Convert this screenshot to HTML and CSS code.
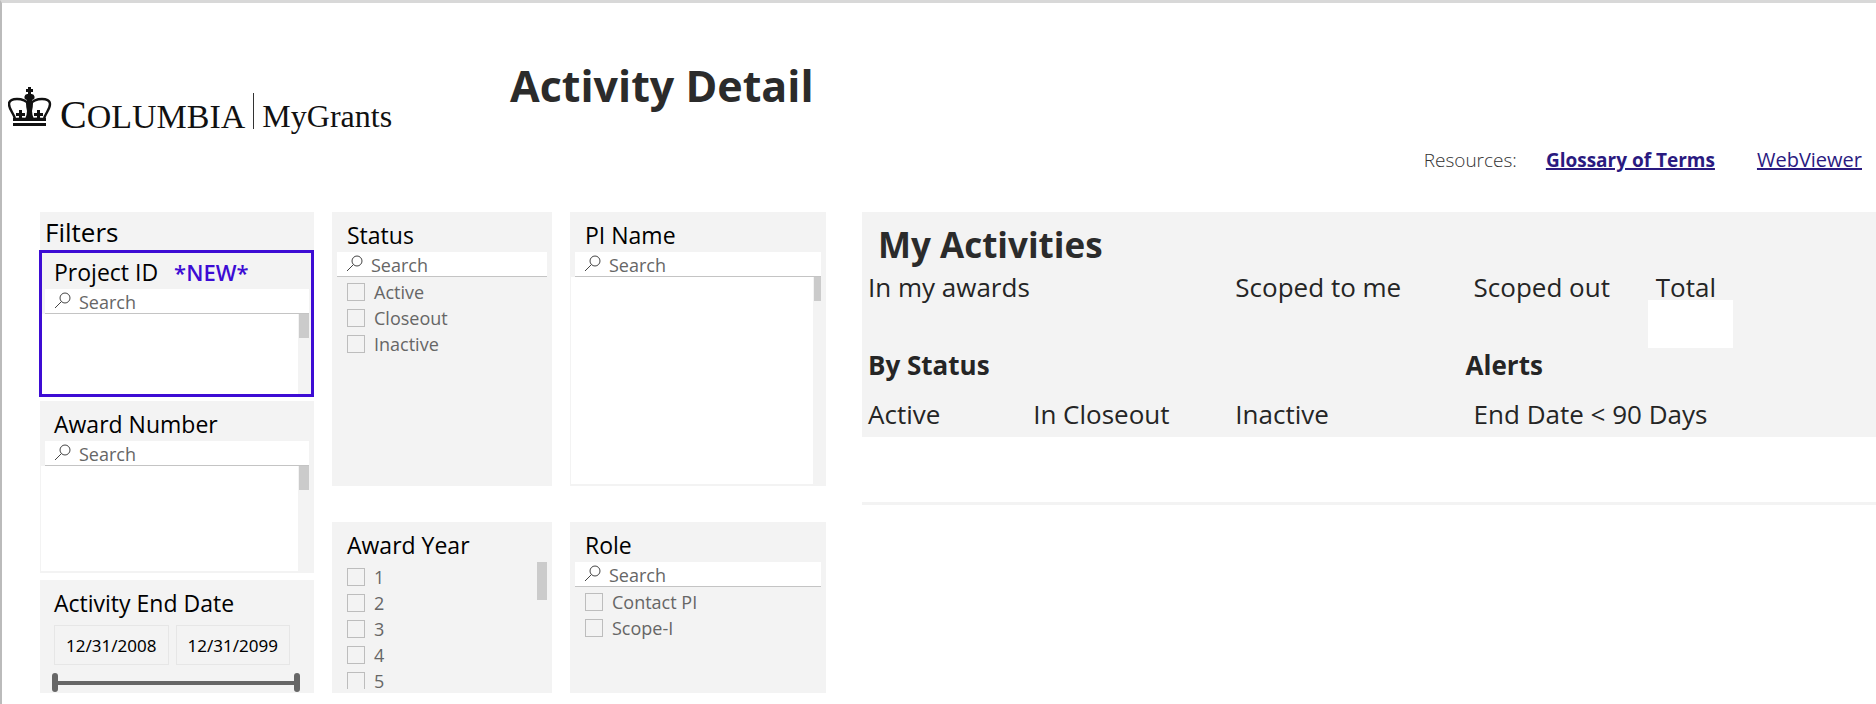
FILE: index.html
```html
<!DOCTYPE html>
<html lang="en">
<head>
    <meta charset="UTF-8">
    <meta name="viewport" content="width=device-width, initial-scale=1.0">
    <title>Activity Detail</title>
    <link rel="stylesheet" href="styles.css">
</head>
<body>

<svg class="defs" aria-hidden="true">
    <symbol id="icon-search" viewBox="0 0 17 17">
        <circle cx="11" cy="6" r="5" fill="none" stroke="currentColor"/>
        <path d="M7.5 9.5L1 16" fill="none" stroke="currentColor"/>
    </symbol>
</svg>

<header class="header">
    <div class="logo">
        <svg class="crown" viewBox="0 0 44 40" aria-hidden="true">
            <path d="M20 0h3v2h2v3h-2v2a3 3 0 0 1 1 6q1 1 1 3q0 4-1 8q0 4 2 8H17q2-4 2-8q-1-4-1-8q0-2 1-3a3 3 0 0 1 1-6V5h-2V2h2z"/>
            <path d="M7 32C6 26 1 23 1 17C1 13 5 12 9 12C14 12 19 14 20 17M36 32C37 26 42 23 42 17C42 13 38 12 34 12C29 12 24 14 23 17" fill="none" stroke="#111" stroke-width="2.4"/>
            <path d="M11 23h3v3h3v3h-3v3h-3v-3H8v-3h3zM29 23h3v3h3v3h-3v3h-3v-3h-3v-3h3z"/>
            <path d="M5 31Q13 30 21 31Q30 30 38 31V34H5zM5 36h33v3H5z"/>
        </svg>
        <span class="logo-name"><span class="logo-cap">C</span>OLUMBIA</span>
        <span class="logo-app">MyGrants</span>
    </div>
    <h1>Activity Detail</h1>
    <nav class="resources">
        <span class="resources-label">Resources:</span>
        <a href="#glossary"><b>Glossary of Terms</b></a>
        <a href="#webviewer">WebViewer</a>
    </nav>
</header>

<main class="content">
    <div class="column column-filters">
        <h2 class="filters-title">Filters</h2>

        <section class="panel panel-project">
            <h3><label for="project">Project ID</label> <span class="new">*NEW*</span></h3>
            <div class="search">
                <svg><use href="#icon-search"/></svg>
                <input type="text" id="project" placeholder="Search">
            </div>
            <div class="results"><div class="thumb"></div></div>
        </section>

        <section class="panel panel-award">
            <h3><label for="award">Award Number</label></h3>
            <div class="search">
                <svg><use href="#icon-search"/></svg>
                <input type="text" id="award" placeholder="Search">
            </div>
            <div class="results"><div class="thumb"></div></div>
        </section>

        <section class="panel panel-dates">
            <h3>Activity End Date</h3>
            <div class="dates">
                <input type="text" value="12/31/2008" aria-label="Start date">
                <input type="text" value="12/31/2099" aria-label="End date">
            </div>
            <div class="slider">
                <input type="range" min="2008" max="2099" value="2008" aria-label="From">
                <input type="range" min="2008" max="2099" value="2099" aria-label="To">
            </div>
        </section>
    </div>

    <div class="column column-status">
        <section class="panel panel-top">
            <h3><label for="status">Status</label></h3>
            <div class="search">
                <svg><use href="#icon-search"/></svg>
                <input type="text" id="status" placeholder="Search">
            </div>
            <div class="options">
                <label><input type="checkbox">Active</label>
                <label><input type="checkbox">Closeout</label>
                <label><input type="checkbox">Inactive</label>
            </div>
        </section>

        <section class="panel panel-bottom">
            <h3>Award Year</h3>
            <div class="year-list">
                <div class="options">
                    <label><input type="checkbox">1</label>
                    <label><input type="checkbox">2</label>
                    <label><input type="checkbox">3</label>
                    <label><input type="checkbox">4</label>
                    <label><input type="checkbox">5</label>
                </div>
                <div class="thumb thumb-long"></div>
            </div>
        </section>
    </div>

    <div class="column column-pi">
        <section class="panel panel-top">
            <h3><label for="pi">PI Name</label></h3>
            <div class="search">
                <svg><use href="#icon-search"/></svg>
                <input type="text" id="pi" placeholder="Search">
            </div>
            <div class="results"><div class="thumb"></div></div>
        </section>

        <section class="panel panel-bottom">
            <h3><label for="role">Role</label></h3>
            <div class="search">
                <svg><use href="#icon-search"/></svg>
                <input type="text" id="role" placeholder="Search">
            </div>
            <div class="options">
                <label><input type="checkbox">Contact PI</label>
                <label><input type="checkbox">Scope-I</label>
            </div>
        </section>
    </div>

    <div class="column column-activities">
        <section class="activities">
            <h2>My Activities</h2>
            <div class="row row-scope">
                <span class="wide">In my awards</span>
                <span>Scoped to me</span>
                <span>Scoped out</span>
                <div class="total">Total<div class="total-value"></div></div>
            </div>
            <div class="row row-heads">
                <h3 class="head-status">By Status</h3>
                <h3 class="head-alerts">Alerts</h3>
            </div>
            <div class="row">
                <span>Active</span>
                <span>In Closeout</span>
                <span>Inactive</span>
                <span class="wide">End Date &lt; 90 Days</span>
            </div>
        </section>
        <hr>
    </div>
</main>

</body>
</html>
```

FILE: styles.css
```css
* {
    box-sizing: border-box;
}

body {
    margin: 0;
    min-height: 100vh;
    border-top: 3px solid #d8d8d8;
    border-left: 2px solid #bbb;
    background-color: #fff;
    color: #000;
    font-family: 'Open Sans', 'Noto Sans', sans-serif;
    overflow-x: hidden;
}

h1, h2, h3 {
    margin: 0;
}

.defs {
    display: none;
}

/* header */
.header {
    display: flex;
    height: 209px;
    padding-right: 14px;
}

.logo {
    display: flex;
    align-items: flex-start;
    width: 508px;
    padding: 84px 0 0 6px;
    color: #111;
    font-family: 'Liberation Serif', serif;
    font-size: 34px;
    line-height: 48px;
}

.crown {
    width: 44px;
    height: 40px;
    margin-right: 8px;
    fill: #111;
}

.logo-name {
    padding-top: 4px;
}

.logo-cap {
    font-size: 40px;
}

.logo-app {
    height: 36px;
    margin: 6px 0 0 8px;
    padding-left: 8px;
    border-left: 1px solid #333;
    font-size: 32px;
    line-height: 46px;
}

h1 {
    padding-top: 53px;
    color: #2b2b2b;
    font-size: 43px;
    line-height: 60px;
}

.resources {
    display: flex;
    gap: 42px;
    margin-left: auto;
    padding-top: 144px;
    font-size: 20px;
    line-height: 26px;
}

.resources-label {
    margin-right: -13px;
    color: #333;
    font-size: 19px;
    font-weight: 300;
}

.resources a {
    color: #2a1a80;
}

.resources b {
    font-size: 19px;
}

/* filter panels */
.content {
    display: flex;
    gap: 18px;
    padding-left: 38px;
}

.column {
    display: flex;
    flex-direction: column;
}

.column-filters {
    width: 274px;
}

.column-status {
    width: 220px;
}

.column-pi {
    width: 256px;
}

.column-activities {
    flex: 1;
    margin-left: 18px;
}

.filters-title {
    height: 38px;
    padding-left: 5px;
    background-color: #f3f3f3;
    font-size: 26px;
    font-weight: 400;
    line-height: 40px;
}

.panel {
    display: flex;
    flex-direction: column;
    background-color: #f3f3f3;
}

.panel h3 {
    height: 40px;
    padding: 5px 15px 0;
    font-size: 23px;
    font-weight: 400;
    line-height: 36px;
}

.column-filters .panel h3 {
    padding-left: 14px;
}

.panel-project {
    height: 147px;
    margin: 0 0 4px -1px;
    border: 3px solid #3d0cd4;
}

.column-filters .panel-project h3 {
    height: 36px;
    padding: 1px 12px 0;
}

.panel-project .search {
    margin: 0 2px 0 3px;
}

.panel-project .results {
    margin: 0 2px 0 0;
}

.new {
    margin-left: 10px;
    color: #3d0cd4;
    font-size: 22px;
    font-weight: 600;
}

.panel-award {
    height: 172px;
    margin-bottom: 7px;
}

.panel-dates {
    height: 113px;
}

.panel-top {
    height: 274px;
    margin-bottom: 36px;
}

.panel-bottom {
    height: 171px;
}

.search {
    display: flex;
    gap: 8px;
    height: 25px;
    margin: 0 5px;
    padding-left: 9px;
    border-bottom: 1px solid #c4c4c4;
    background-color: #fff;
    color: #444;
}

.search svg {
    flex: none;
    width: 17px;
    height: 17px;
    margin-top: 3px;
}

.search input {
    width: 100%;
    min-width: 0;
    padding: 2px 0 0;
    border: none;
    outline: none;
    background: none;
    font: 18px 'Open Sans', sans-serif;
}

.search input::placeholder {
    color: #666;
    opacity: 1;
}

.results {
    display: flex;
    flex: 1;
    justify-content: flex-end;
    margin: 0 5px 2px 1px;
    background: linear-gradient(to left, #f3f3f3 11px, #fff 11px);
}

.thumb {
    width: 10px;
    height: 24px;
    background-color: #cbcbcb;
}

.thumb-long {
    height: 38px;
}

.panel-top .thumb {
    width: 7px;
}

.panel-top .results {
    background: linear-gradient(to left, #f3f3f3 8px, #fff 8px);
}

.options {
    padding: 2px 15px 0;
}

.options label {
    display: flex;
    align-items: center;
    gap: 9px;
    height: 26px;
    color: #666;
    font-size: 18px;
}

.options input {
    appearance: none;
    width: 18px;
    height: 18px;
    margin: 0;
    border: 1px solid #bdbdbd;
}

.options input:checked {
    background-color: #666;
}

.year-list {
    display: flex;
    justify-content: space-between;
    height: 127px;
    padding-right: 5px;
    overflow: hidden;
}

.dates {
    display: flex;
    gap: 7px;
    margin-top: 5px;
    padding: 0 24px 0 14px;
}

.dates input {
    width: 100%;
    min-width: 0;
    height: 40px;
    border: 1px solid #e6e6e6;
    background-color: #f3f3f3;
    font: 17px 'Noto Sans', sans-serif;
    text-align: center;
}

.slider {
    display: grid;
    align-items: center;
    height: 19px;
    margin: 8px 14px 0 12px;
    background: linear-gradient(#666, #666) center / 240px 4px no-repeat;
}

/* both handles share one track */
.slider input {
    appearance: none;
    grid-area: 1 / 1;
    width: 100%;
    height: 19px;
    margin: 0;
    background: none;
    pointer-events: none;
}

.slider input::-webkit-slider-thumb {
    appearance: none;
    width: 6px;
    height: 19px;
    border-radius: 3px;
    background-color: #666;
    pointer-events: auto;
}

/* activities */
.activities {
    height: 225px;
    padding-left: 6px;
    background-color: #f3f3f3;
    color: #252525;
    font-size: 26px;
    line-height: 36px;
}

.activities h2 {
    padding: 9px 0 0 10px;
    color: #2b2b2b;
    font-size: 35px;
    line-height: 48px;
}

.activities h3 {
    font-size: 26px;
    line-height: 36px;
}

.row {
    display: grid;
    grid-template-columns: 165fr 202fr 238fr 182fr 220fr;
}

.row-scope {
    height: 78px;
}

.wide {
    grid-column: span 2;
}

.total {
    padding-top: 2px;
    line-height: 32px;
}

.total-value {
    width: 85px;
    height: 48px;
    margin: -3px 0 0 -8px;
    background-color: #fff;
}

.row-heads {
    height: 49px;
}

.head-status {
    grid-column: span 3;
}

.head-alerts {
    margin-left: -8px;
}

hr {
    width: 100%;
    height: 3px;
    margin: 65px 0 0;
    border: none;
    background-color: #f3f3f3;
}
```
